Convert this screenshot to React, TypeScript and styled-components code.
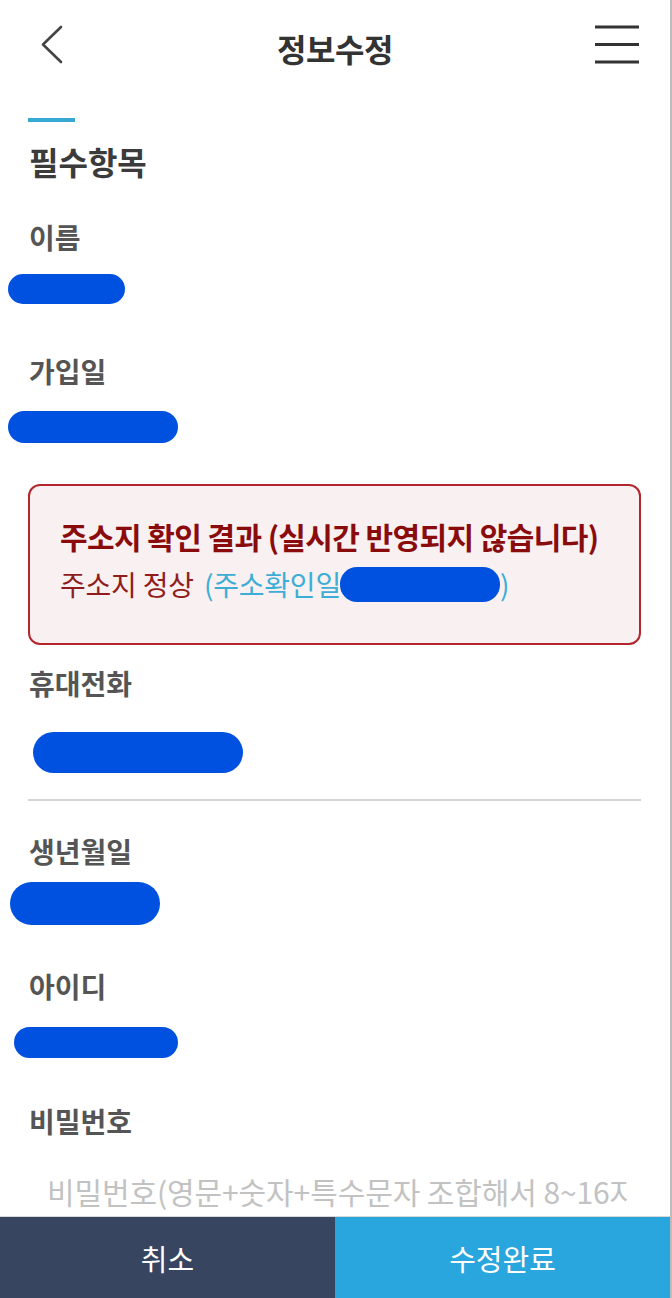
import React from "react";
import styled, { createGlobalStyle } from "styled-components";

const GlobalStyle = createGlobalStyle`
  html, body {
    margin: 0;
    padding: 0;
    background: #ffffff;
  }
  body {
    font-family: "Noto Sans CJK KR", "Noto Sans", sans-serif;
    -webkit-font-smoothing: antialiased;
  }
  * { box-sizing: border-box; }
`;

const Screen = styled.div`
  display: flex;
  flex-direction: column;
  width: 672px;
  height: 100vh;
  background: #ffffff;
  border-right: 2px solid #bdbdbd;
  overflow: hidden;
`;

const Header = styled.header`
  display: grid;
  grid-template-columns: 1fr auto 1fr;
  align-items: center;
  height: 90px;
  padding: 0 31px;
  flex-shrink: 0;
`;

const IconButton = styled.button<{ $align: "start" | "end" }>`
  justify-self: ${(p) => p.$align};
  display: flex;
  align-items: center;
  justify-content: center;
  padding: 0;
  border: 0;
  background: none;
  cursor: pointer;
`;

const Title = styled.h1`
  margin: 0;
  padding-top: 6px;
  font-size: 32px;
  line-height: 40px;
  font-weight: 700;
  color: #333333;
  letter-spacing: -0.5px;
`;

const Main = styled.main`
  flex: 1;
  overflow: hidden;
  display: flex;
  flex-direction: column;
`;

const AccentBar = styled.div`
  width: 47px;
  height: 4px;
  margin: 28px 0 0 28px;
  background: #37a8d3;
`;

const SectionTitle = styled.h2`
  margin: 20px 0 0;
  padding-left: 29px;
  font-size: 32px;
  line-height: 38px;
  font-weight: 700;
  color: #3b3b3b;
  letter-spacing: 0;
`;

const Field = styled.section<{ $top: number }>`
  display: flex;
  flex-direction: column;
  margin-top: ${(p) => p.$top}px;
`;

const Label = styled.h3`
  margin: 0;
  padding-left: 29px;
  font-size: 28px;
  line-height: 34px;
  font-weight: 700;
  color: #555555;
  letter-spacing: 0;
`;

const Redaction = styled.div<{ $w: number; $h: number; $x: number; $gap: number }>`
  width: ${(p) => p.$w}px;
  height: ${(p) => p.$h}px;
  margin: ${(p) => p.$gap}px 0 0 ${(p) => p.$x}px;
  border-radius: ${(p) => p.$h / 2}px;
  background: #0051e0;
`;

const AlertBox = styled.div`
  margin: 41px 29px 0 28px;
  height: 161px;
  padding: 26px 20px 0 30px;
  border: 2px solid #b3262d;
  border-radius: 12px;
  background: #f8f0f1;
`;

const AlertTitle = styled.p`
  margin: 0;
  font-size: 30px;
  line-height: 48px;
  font-weight: 700;
  color: #8a0b0b;
  letter-spacing: -0.6px;
  white-space: nowrap;
`;

const AlertStatus = styled.p`
  margin: 0;
  font-size: 28px;
  line-height: 48px;
  font-weight: 400;
  color: #901c1c;
  white-space: nowrap;
  display: flex;
  align-items: center;
  letter-spacing: -0.2px;
`;

const CheckDate = styled.span`
  color: #3caed6;
  display: inline-flex;
  align-items: center;
  margin-left: 10px;
`;

const InlineRedaction = styled.span`
  display: inline-block;
  width: 160px;
  height: 35px;
  border-radius: 17px;
  background: #0051e0;
  margin-left: -1px;
`;

const Divider = styled.hr`
  margin: 26px 29px 0 28px;
  height: 2px;
  border: 0;
  background: #d4d4d4;
`;

const PasswordInput = styled.input`
  margin: 30px 29px 0 30px;
  height: 46px;
  padding: 0 12px 0 17px;
  border: 0;
  outline: none;
  background: transparent;
  font-family: "Noto Sans CJK KR", "Noto Sans", sans-serif;
  font-size: 30px;
  letter-spacing: -0.1px;
  &::placeholder {
    color: #c2c2c2;
  }
`;

const Footer = styled.footer`
  display: grid;
  grid-template-columns: 1fr 1fr;
  height: 82px;
  flex-shrink: 0;
  border-top: 1px solid #d8d8d8;
`;

const FooterButton = styled.button<{ $primary?: boolean }>`
  border: 0;
  margin: 0;
  padding: 0;
  background: ${(p) => (p.$primary ? "#29a6dd" : "#384560")};
  color: #ffffff;
  font-family: "Noto Sans CJK KR", "Noto Sans", sans-serif;
  font-size: 29px;
  font-weight: 400;
  cursor: pointer;
`;

const BackIcon = () => (
  <svg width="32" height="40" viewBox="0 0 32 40" fill="none">
    <polyline points="30,2 12,19.5 30,37" stroke="#444" strokeWidth="2.6" strokeLinecap="round" strokeLinejoin="round" />
  </svg>
);

const MenuIcon = () => (
  <svg width="44" height="42" viewBox="0 0 44 42" fill="none">
    <line x1="0" y1="3" x2="44" y2="3" stroke="#333" strokeWidth="3" />
    <line x1="0" y1="20.5" x2="44" y2="20.5" stroke="#333" strokeWidth="3" />
    <line x1="0" y1="38" x2="44" y2="38" stroke="#333" strokeWidth="3" />
  </svg>
);

export default function App() {
  return (
    <>
      <GlobalStyle />
      <Screen>
        <Header>
          <IconButton $align="start" aria-label="뒤로">
            <BackIcon />
          </IconButton>
          <Title>정보수정</Title>
          <IconButton $align="end" aria-label="메뉴">
            <MenuIcon />
          </IconButton>
        </Header>
        <Main>
          <AccentBar />
          <SectionTitle>필수항목</SectionTitle>

          <Field $top={40}>
            <Label>이름</Label>
            <Redaction $w={117} $h={30} $x={8} $gap={20} />
          </Field>

          <Field $top={50}>
            <Label>가입일</Label>
            <Redaction $w={170} $h={32} $x={8} $gap={23} />
          </Field>

          <AlertBox>
            <AlertTitle>주소지 확인 결과 (실시간 반영되지 않습니다)</AlertTitle>
            <AlertStatus>
              주소지 정상
              <CheckDate>
                (주소확인일
                <InlineRedaction />)
              </CheckDate>
            </AlertStatus>
          </AlertBox>

          <Field $top={21}>
            <Label>휴대전화</Label>
            <Redaction $w={210} $h={41} $x={33} $gap={32} />
          </Field>

          <Divider />

          <Field $top={33}>
            <Label>생년월일</Label>
            <Redaction $w={150} $h={43} $x={10} $gap={14} />
          </Field>

          <Field $top={44}>
            <Label>아이디</Label>
            <Redaction $w={164} $h={31} $x={14} $gap={24} />
          </Field>

          <Field $top={46}>
            <Label>비밀번호</Label>
            <PasswordInput type="password" placeholder="비밀번호(영문+숫자+특수문자 조합해서 8~16자리)" />
          </Field>
        </Main>
        <Footer>
          <FooterButton>취소</FooterButton>
          <FooterButton $primary>수정완료</FooterButton>
        </Footer>
      </Screen>
    </>
  );
}
